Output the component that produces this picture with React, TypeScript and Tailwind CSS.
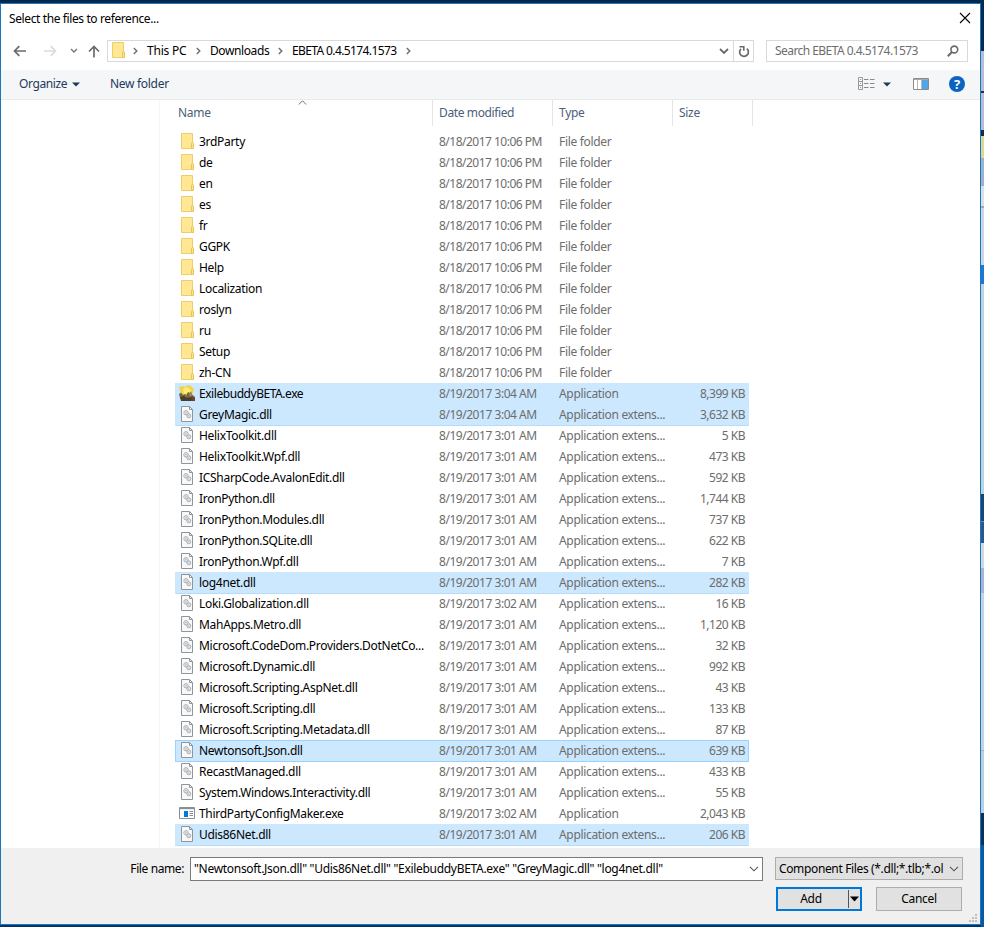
import { useState } from "react";
import type { ReactNode } from "react";

type Kind = "folder" | "dll" | "buddy" | "exe";

interface FileRow {
    name: string;
    date: string;
    type: string;
    size: string;
    kind: Kind;
}

const folders = ["3rdParty", "de", "en", "es", "fr", "GGPK", "Help", "Localization", "roslyn", "ru", "Setup", "zh-CN"];

const folderRow = (name: string): FileRow => ({
    name,
    date: "8/18/2017 10:06 PM",
    type: "File folder",
    size: "",
    kind: "folder",
});

const dll = (name: string, time: string, size: string): FileRow => ({
    name,
    date: `8/19/2017 ${time} AM`,
    type: "Application extens...",
    size: `${size} KB`,
    kind: "dll",
});

const files: FileRow[] = [
    ...folders.map(folderRow),
    { name: "ExilebuddyBETA.exe", date: "8/19/2017 3:04 AM", type: "Application", size: "8,399 KB", kind: "buddy" },
    dll("GreyMagic.dll", "3:04", "3,632"),
    dll("HelixToolkit.dll", "3:01", "5"),
    dll("HelixToolkit.Wpf.dll", "3:01", "473"),
    dll("ICSharpCode.AvalonEdit.dll", "3:01", "592"),
    dll("IronPython.dll", "3:01", "1,744"),
    dll("IronPython.Modules.dll", "3:01", "737"),
    dll("IronPython.SQLite.dll", "3:01", "622"),
    dll("IronPython.Wpf.dll", "3:01", "7"),
    dll("log4net.dll", "3:01", "282"),
    dll("Loki.Globalization.dll", "3:02", "16"),
    dll("MahApps.Metro.dll", "3:01", "1,120"),
    dll("Microsoft.CodeDom.Providers.DotNetCo...", "3:01", "32"),
    dll("Microsoft.Dynamic.dll", "3:01", "992"),
    dll("Microsoft.Scripting.AspNet.dll", "3:01", "43"),
    dll("Microsoft.Scripting.dll", "3:01", "133"),
    dll("Microsoft.Scripting.Metadata.dll", "3:01", "87"),
    dll("Newtonsoft.Json.dll", "3:01", "639"),
    dll("RecastManaged.dll", "3:01", "433"),
    dll("System.Windows.Interactivity.dll", "3:01", "55"),
    { name: "ThirdPartyConfigMaker.exe", date: "8/19/2017 3:02 AM", type: "Application", size: "2,043 KB", kind: "exe" },
    dll("Udis86Net.dll", "3:01", "206"),
];

const focused = "Newtonsoft.Json.dll";

function FolderIcon() {
    return (
        <svg width="16" height="16" viewBox="0 0 16 16">
            <path d="M2.5.5h11v15h-11z" fill="#ffe794" stroke="#edcd6c" />
            <path d="M12.5 15.5v-5l1-1.500 1 1.500v5z" fill="#ffe37f" stroke="#e6c45a" />
        </svg>
    );
}

function DllIcon() {
    return (
        <svg width="16" height="16" viewBox="0 0 16 16">
            <path d="M2.5.5h8l3 3v12h-11z" fill="#f9f9f9" stroke="#8f959a" />
            <path d="M10.5.5v3h3" fill="none" stroke="#8f959a" />
            <circle cx="7" cy="6.800" r="2.200" fill="#eceef0" stroke="#a3a8ae" strokeWidth=".9" />
            <circle cx="7" cy="6.800" r=".7" fill="#a5aab0" />
            <circle cx="9.800" cy="9.800" r="2" fill="#e8eaec" stroke="#a3a8ae" strokeWidth=".9" />
            <circle cx="9.800" cy="9.800" r=".6" fill="#a5aab0" />
        </svg>
    );
}

function BuddyIcon() {
    return (
        <svg width="16" height="16" viewBox="0 0 16 16">
            <path d="M0 2l3-1 3 1 3-2 3 1 3 3-1 4-2 3H3L1 6z" fill="#f2d24c" />
            <path d="M4 4l4-2 4 3-2 3-5 1z" fill="#ffec72" />
            <path d="M0 9l2-1.500 2 2.500 2-1 1.500 1 1.500-3 2 1 1-1.500 1 3 3 2.500v4H3l-2-3z" fill="#716640" />
            <path d="M1 12l4-1 3 2 5-1 3 2v2H2z" fill="#4d3d2e" />
            <path d="M10 9l2-2 1 3-2 2zM6 11l1-2 1 3z" fill="#a98763" />
            <path d="M12 14l3-2 1 2v2h-4z" fill="#7a3a2a" />
        </svg>
    );
}

function ExeIcon() {
    return (
        <svg width="16" height="16" viewBox="0 0 16 16">
            <path d="M.5 2.500h15v11H.5z" fill="#fff" stroke="#8a8f94" />
            <path d="M1 3h14v1.200H1z" fill="#8a8f94" />
            <path d="M5 6h4v6H5z" fill="#0078d7" />
            <path d="M10.500 6.500H14M10.500 8.500H14M10.500 10.500H14" stroke="#8a8f94" />
        </svg>
    );
}

const icons: Record<Kind, ReactNode> = {
    folder: <FolderIcon />,
    dll: <DllIcon />,
    buddy: <BuddyIcon />,
    exe: <ExeIcon />,
};

function Crumb() {
    return (
        <svg width="5" height="8" viewBox="0 0 5 8" className="shrink-0">
            <path d="M.8 1l3 3-3 3" fill="none" stroke="#6d6d6d" strokeWidth="1.400" />
        </svg>
    );
}

function Chevron() {
    return (
        <svg width="10" height="6" viewBox="0 0 10 6" className="shrink-0">
            <path d="M1 .8l4 4 4-4" fill="none" stroke="#555" strokeWidth="1.100" />
        </svg>
    );
}

function AddressRow() {
    return (
        <div className="flex h-[22px] items-center pr-3">
            <div className="flex w-[106px] items-center pl-3">
                <svg width="14" height="12" viewBox="0 0 14 12">
                    <path d="M13 6H1.800M6.300 1.200L1.500 6l4.800 4.800" fill="none" stroke="#6a6a6a" strokeWidth="1.700" />
                </svg>
                <svg width="14" height="12" viewBox="0 0 14 12" className="ml-4">
                    <path d="M1 6h11.200M7.700 1.200L12.500 6l-4.800 4.800" fill="none" stroke="#dcdcdc" strokeWidth="1.700" />
                </svg>
                <svg width="8" height="6" viewBox="0 0 8 6" className="ml-[13px]">
                    <path d="M1 1l3 3 3-3" fill="none" stroke="#777" strokeWidth="1.400" />
                </svg>
                <svg width="12" height="13" viewBox="0 0 12 13" className="ml-[10px]">
                    <path d="M6 12.500V1.500M1 6.500l5-5 5 5" fill="none" stroke="#6a6a6a" strokeWidth="1.700" />
                </svg>
            </div>
            <div className="flex h-[22px] w-[647px] items-center border border-[#d9d9d9]">
                <div className="flex flex-1 items-center pl-[2px] leading-[18px]">
                    <span className="mb-[2px]"><FolderIcon /></span>
                    <span className="ml-[7px] flex"><Crumb /></span>
                    <span className="mb-px ml-[9px] w-[41px] tracking-[-0.2px]">This PC</span>
                    <span className="ml-[8px] flex"><Crumb /></span>
                    <span className="mb-px ml-[9px] w-[60px] tracking-[-0.4px]">Downloads</span>
                    <span className="ml-[8px] flex"><Crumb /></span>
                    <span className="mb-px ml-[9px] w-[106px] tracking-[-0.61px]">EBETA 0.4.5174.1573</span>
                    <span className="ml-[8px] flex"><Crumb /></span>
                </div>
                <svg width="10" height="7" viewBox="0 0 10 7" className="mr-1">
                    <path d="M1 1l4 4 4-4" fill="none" stroke="#6a6a6a" strokeWidth="1.800" />
                </svg>
                <div className="flex h-full w-5 items-center justify-center border-l border-[#d9d9d9]">
                    <svg width="12" height="13" viewBox="0 0 12 13">
                        <path d="M3 3.800A4.400 4.400 0 1 0 8.800 3.600" fill="none" stroke="#6a6a6a" strokeWidth="1.700" />
                        <path d="M1.500 1.800h4.300v4" fill="none" stroke="#6a6a6a" strokeWidth="1.600" />
                    </svg>
                </div>
            </div>
            <div className="ml-3 flex h-[22px] w-[202px] items-center justify-between border border-[#d9d9d9] pr-2 pl-2 text-[#6d6d6d]">
                <span className="mb-px tracking-[-0.55px]">Search EBETA 0.4.5174.1573</span>
                <svg width="12" height="12" viewBox="0 0 12 12">
                    <circle cx="7.300" cy="4.500" r="3.400" fill="none" stroke="#6a6a6a" strokeWidth="1.600" />
                    <path d="M4.900 7L.8 11.200" stroke="#6a6a6a" strokeWidth="2" />
                </svg>
            </div>
        </div>
    );
}

function Toolbar() {
    return (
        <div className="mt-[8px] flex h-[30px] items-center border-b border-[#e8eaec] bg-[#f5f6f7] pl-[18px] text-[#1e395b]">
            <span className="mb-[2px] w-[49px] tracking-[-0.4px]">Organize</span>
            <svg width="8" height="5" viewBox="0 0 8 5" className="mb-px ml-[4px]">
                <path d="M0 .5h8L4 4.500z" fill="#1e395b" />
            </svg>
            <span className="mb-[2px] ml-[30px] flex-1">New folder</span>
            <svg width="17" height="13" viewBox="0 0 17 13" className="mb-[2px]">
                <path d="M.5.5h4v12h-4zM.5 4.500h4M.5 8.500h4" fill="none" stroke="#999" />
                <path d="M2 2.500h1M2 6.500h1M2 10.500h1" stroke="#999" />
                <path d="M6 2.500h4.500M12 2.500h4.500M6 6.500h4.500M12 6.500h4.500M6 10.500h4.500M12 10.500h4.500" stroke="#8a8a8a" />
            </svg>
            <svg width="8" height="5" viewBox="0 0 8 5" className="mb-px ml-[8px]">
                <path d="M0 .5h8L4 4.500z" fill="#1e395b" />
            </svg>
            <svg width="16" height="12" viewBox="0 0 16 12" className="mb-px ml-[22px]">
                <path d="M.5.500h15v11H.5z" fill="#fff" stroke="#8b8b8b" />
                <path d="M1 1h14v1H1z" fill="#a8a8a8" />
                <path d="M9 2h6v9H9z" fill="#52a5e6" />
                <path d="M4.500 2v9M8.500 2v9" stroke="#b9b9b9" />
            </svg>
            <span className="mr-[15px] mb-px ml-5 flex size-4 items-center justify-center rounded-full bg-[#0a64c0] text-[13px] leading-none font-bold text-white">
                ?
            </span>
        </div>
    );
}

function ListHeader() {
    return (
        <div className="relative ml-[18px] flex h-[26px] w-[575px] leading-[25px] text-[#4c607a]">
            <span className="w-[255px] border-r border-[#e5e5e5]">Name</span>
            <span className="w-[120px] border-r border-[#e5e5e5] pl-1.5 tracking-[-0.38px]">Date modified</span>
            <span className="w-[120px] border-r border-[#e5e5e5] pl-1.5">Type</span>
            <span className="w-[80px] border-r border-[#e5e5e5] pl-1.5">Size</span>
            <svg width="9" height="5" viewBox="0 0 9 5" className="absolute top-0 left-[120px]">
                <path d="M.8 4.500l3.700-3.700 3.700 3.700" fill="none" stroke="#707070" />
            </svg>
        </div>
    );
}

// Desktop visible past the right edge of the dialog
const backdrop = [
    { h: 51, c: "bg-[#042a4f]" },
    { h: 40, c: "bg-[#b4bfd6]" },
    { h: 2, c: "bg-[#22324e]" },
    { h: 37, c: "bg-[#b4bfd6]" },
    { h: 6, c: "bg-[#152c4a]" },
    { h: 22, c: "bg-[#dcd992]" },
    { h: 28, c: "bg-[#9fb2cc]" },
    { h: 20, c: "bg-[#d5e2ec]" },
    { h: 2, c: "bg-[#9eabbb]" },
    { h: 57, c: "bg-[#c9d8e4]" },
    { h: 19, c: "bg-[#1d78d6]" },
    { h: 210, c: "bg-[#bfd2df]" },
    { h: 27, c: "bg-[#1c4470]" },
    { h: 1, c: "bg-[#6c8fb5]" },
    { h: 21, c: "bg-[#2c5889]" },
    { h: 25, c: "bg-[#cbdae3]" },
    { h: 25, c: "bg-[#a8b5d2]" },
    { h: 157, c: "bg-[#c2d3e2]" },
    { h: 1, c: "bg-[#a3b3c4]" },
    { h: 62, c: "bg-[#bdd0e2]" },
    { h: 32, c: "bg-[#142f55]" },
    { h: 82, c: "bg-[#075aa8]" },
];

export default function App() {
    const [selected, setSelected] = useState<string[]>([
        "Newtonsoft.Json.dll",
        "Udis86Net.dll",
        "ExilebuddyBETA.exe",
        "GreyMagic.dll",
        "log4net.dll",
    ]);

    const toggle = (name: string) => {
        setSelected(selected.includes(name) ? selected.filter((n) => n !== name) : [...selected, name]);
    };

    return (
        <div className="flex h-[927px] w-[984px] overflow-hidden bg-[#02366b] font-['Noto_Sans','Open_Sans',sans-serif] text-[12px] tracking-[-0.3px] whitespace-nowrap text-black">
            <div className="flex w-[981px] flex-col">
                <div className="h-[3px] bg-[#03274d]" />
                <div className="flex h-[922px] flex-col border border-[#1a78bd] bg-white">
                    <div className="flex h-9 items-center justify-between pr-[9px] pl-2 leading-[30px]">
                        <span className="mb-[6px] tracking-[-0.39px]">Select the files to reference...</span>
                        <svg width="12" height="12" viewBox="0 0 12 12" className="mb-[8px]">
                            <path d="M1 1l10 10M11 1L1 11" stroke="#000" strokeWidth="1.100" />
                        </svg>
                    </div>
                    <AddressRow />
                    <Toolbar />
                    <div className="flex h-[748px]">
                        <div className="w-[159px] border-r border-[#f5f5f5]" />
                        <div>
                            <ListHeader />
                            <div className="mt-[5px] ml-[15px] w-[574px]">
                                {files.map((f) => (
                                    <div
                                        key={f.name}
                                        onClick={() => toggle(f.name)}
                                        className={`-mb-px flex h-[22px] items-center border pr-[3px] pl-[3px] ${
                                            !selected.includes(f.name)
                                                ? "border-transparent"
                                                : f.name === focused
                                                  ? "border-[#99d1ff] bg-[#cce8ff]"
                                                  : "border-[#cce8ff] border-b-[#b5dcfb] bg-[#cce8ff]"
                                        }`}
                                    >
                                        <span className="mb-[2px] w-5">{icons[f.kind]}</span>
                                        <span className={f.kind === "buddy" ? "w-[240px] tracking-[-0.45px]" : "w-[240px]"}>
                                            {f.name}
                                        </span>
                                        <span
                                            className={`w-[120px] text-[#6d6d6d] ${
                                                f.kind === "folder" ? "tracking-[-0.51px]" : "tracking-[-0.46px]"
                                            }`}
                                        >
                                            {f.date}
                                        </span>
                                        <span className="tracking-[-0.33px] text-[#6d6d6d]">{f.type}</span>
                                        <span className="ml-auto tracking-[-0.5px] text-[#6d6d6d]">{f.size}</span>
                                    </div>
                                ))}
                            </div>
                        </div>
                    </div>
                    <div className="relative flex flex-1 bg-[#f0f0f0] pt-[9px]">
                        <span className="w-[183px] text-right leading-[24px] tracking-[-0.4px]">File name:</span>
                        <div className="ml-[6px] flex h-6 w-[573px] items-center justify-between border border-[#7a7a7a] bg-white pr-[3px] pl-[3px]">
                            <span>{selected.map((n) => `"${n}"`).join(" ")}</span>
                            <Chevron />
                        </div>
                        <div className="ml-3 w-[188px]">
                            <div className="flex h-[23px] items-center justify-between border border-[#adadad] bg-[#e1e1e1] pr-[3px] pl-[3px]">
                                <span className="tracking-[-0.36px]">Component Files (*.dll;*.tlb;*.ol</span>
                                <Chevron />
                            </div>
                            <div className="mt-[7px] flex justify-between pr-px pl-px">
                                <button className="flex h-6 w-[86px] items-center border-2 border-[#0078d7] bg-[#e1e1e1]">
                                    <span className="flex-1 pr-[4px] text-center">Add</span>
                                    <span className="h-[18px] w-px bg-[#555]" />
                                    <svg width="11" height="6" viewBox="0 0 11 6">
                                        <path d="M1 .5h9L5.500 5.500z" fill="#000" />
                                    </svg>
                                </button>
                                <button className="h-6 w-[86px] border border-[#adadad] bg-[#e1e1e1]">Cancel</button>
                            </div>
                        </div>
                        <svg width="9" height="9" viewBox="0 0 9 9" className="absolute right-[2px] bottom-[1px]">
                            <path
                                d="M6 0h2v2H6zM3 3h2v2H3zM6 3h2v2H6zM0 6h2v2H0zM3 6h2v2H3zM6 6h2v2H6z"
                                fill="#bfbfbf"
                            />
                        </svg>
                    </div>
                </div>
                <div className="h-[2px] bg-[#023468]" />
            </div>
            <div className="w-[3px]">
                {backdrop.map((b, i) => (
                    <div key={i} className={b.c} style={{ height: b.h }} />
                ))}
            </div>
        </div>
    );
}
